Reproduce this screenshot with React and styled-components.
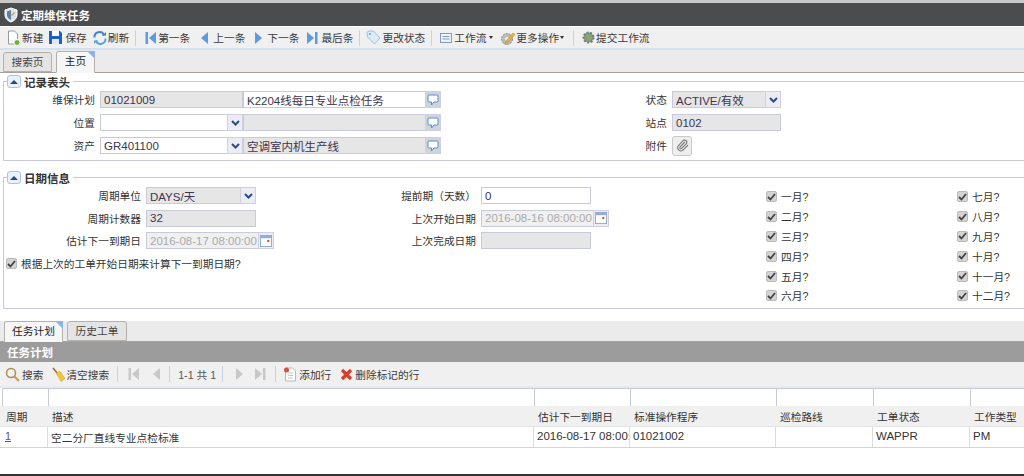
import React from 'react'
import styled, { createGlobalStyle, css } from 'styled-components'
import { Paperclip } from 'lucide-react'

const GlobalStyle = createGlobalStyle`
  html, body {
    margin: 0;
    padding: 0;
    background: #fff;
  }
  body {
    font-family: "Liberation Sans", "Noto Sans CJK SC", sans-serif;
    font-size: 10.7px;
    color: #333;
  }
`

const Page = styled.div`
  position: relative;
  width: 1024px;
  height: 476px;
  overflow: hidden;
  box-sizing: border-box;
  border-bottom: 2px solid #333;
  background-color: #fff;
  background-image: radial-gradient(#f1f1f1 0.6px, transparent 0.7px);
  background-size: 4px 4px;
`

const TitleBar = styled.div`
  display: flex;
  align-items: center;
  gap: 3px;
  box-sizing: border-box;
  height: 27px;
  padding-left: 4px;
  background: #4a4c4e;
  border-top: 3px solid #c9c9c9;
  border-bottom: 1px solid #fff;
  color: #fff;
  font-size: 11.5px;
  font-weight: 700;
`

const Toolbar = styled.div`
  display: flex;
  align-items: center;
  box-sizing: border-box;
  height: ${p => p.$height}px;
  padding-left: ${p => p.$pad}px;
  background: #f0f0f0;
  border-bottom: 2px solid ${p => p.$line};
  white-space: nowrap;
`

const Tool = styled.span`
  display: inline-flex;
  align-items: center;
  gap: ${p => p.$gap ?? 2}px;
  margin-left: ${p => p.$ml ?? 0}px;
  color: ${p => (p.$dim ? '#555' : '#3a3a3a')};
`

const Sep = styled.span`
  width: 1px;
  height: 16px;
  margin-left: ${p => p.$ml}px;
  background: #c4d4e8;
`

const Caret = styled.span`
  width: 0;
  height: 0;
  margin-left: 1px;
  border-left: 2.5px solid transparent;
  border-right: 2.5px solid transparent;
  border-top: 3px solid #333;
`

const TabBar = styled.div`
  display: flex;
  align-items: flex-end;
  gap: 4px;
  box-sizing: border-box;
  height: ${p => p.$height}px;
  margin-top: ${p => p.$mt ?? 0}px;
  padding-left: ${p => p.$pad}px;
  background: #ebebeb;
  border-bottom: 1px solid #a9a09c;
`

const Tab = styled.div`
  position: relative;
  box-sizing: border-box;
  width: ${p => p.$w}px;
  height: ${p => (p.$active ? p.$h + 2 : p.$h)}px;
  margin-bottom: ${p => (p.$active ? -1 : 0)}px;
  line-height: ${p => p.$h - 1}px;
  text-align: center;
  font-size: 10.7px;
  border: 1px solid #b5b0ac;
  border-radius: 3px 3px 0 0;
  color: #444;
  background: #e4e4e4;
  ${p =>
    p.$active &&
    css`
      background: #f6f6f6;
      border-bottom-color: #f6f6f6;
      color: #222;
      &::after {
        content: '';
        position: absolute;
        top: -1px;
        right: -1px;
        border-top: 8px solid #8db4e6;
        border-left: 8px solid transparent;
      }
    `}
`

const Section = styled.fieldset`
  box-sizing: border-box;
  height: ${p => p.$height}px;
  margin: ${p => p.$mt}px 0 0 3px;
  padding: 0;
  border: 1px solid #c9c9d9;
  border-right: none;
  min-inline-size: 0;
`

const Legend = styled.legend`
  display: flex;
  align-items: center;
  gap: 3px;
  margin-left: 3px;
  padding: 0 3px 0 0;
  height: 15px;
  font-size: 11.5px;
  font-weight: 700;
  color: #333;
`

const Collapse = styled.span`
  display: inline-flex;
  align-items: center;
  justify-content: center;
  box-sizing: border-box;
  width: 14px;
  height: 13px;
  border: 1px solid #a9c4e8;
  border-radius: 3px;
  background: #eaf1fb;
  &::before {
    content: '';
    border-left: 4px solid transparent;
    border-right: 4px solid transparent;
    border-bottom: 4px solid #274a8c;
  }
`

const HeaderGrid = styled.div`
  display: grid;
  grid-template-columns: 96px 143px 198px 231px 109px;
  grid-auto-rows: 17px;
  row-gap: 6px;
  align-items: center;
  padding-top: 2px;
`

const Label = styled.label`
  padding-right: 5px;
  text-align: right;
  color: #333;
  white-space: nowrap;
`

const Group = styled.div`
  display: flex;
  box-sizing: border-box;
  height: 17px;
  width: ${p => (p.$w ? `${p.$w}px` : 'auto')};
  margin-right: ${p => p.$mr ?? 0}px;
`

const Input = styled.input`
  flex: 1;
  box-sizing: border-box;
  width: ${p => (p.$w ? `${p.$w}px` : '100%')};
  min-width: 0;
  height: 17px;
  margin: 0;
  padding: 0 0 0 3px;
  border: 1px solid #c9c9dc;
  border-radius: 0;
  outline: none;
  font: 11.5px "Liberation Sans", "Noto Sans CJK SC", sans-serif;
  color: ${p => (p.$muted ? '#aaa' : '#3c3450')};
  background: ${p => (p.$tone === 'grey' ? '#e6e6e6' : p.$tone === 'pale' ? '#f0f0f0' : '#fff')};
`

const Addon = styled.span`
  display: inline-flex;
  flex: none;
  align-items: center;
  justify-content: center;
  box-sizing: border-box;
  width: ${p => p.$w ?? 16}px;
  height: 17px;
  margin-left: -1px;
  border: 1px solid #d0d0e0;
  background: ${p => p.$bg ?? '#ecedf4'};
`

const AttachButton = styled.span`
  display: inline-flex;
  align-items: center;
  justify-content: center;
  box-sizing: border-box;
  width: 20px;
  height: 20px;
  border: 1px solid #c9c9c9;
  border-radius: 3px;
  background: #eee;
  color: #777;
`

const DateBody = styled.div`
  display: flex;
  padding-top: 2px;
`

const DateLeft = styled.div`
  width: 762px;
`

const DateGrid = styled.div`
  display: grid;
  grid-template-columns: 142px 255px 80px 285px;
  grid-auto-rows: 17px;
  row-gap: 5.5px;
  align-items: center;
`

const CheckRow = styled.div`
  display: flex;
  align-items: center;
  gap: 4px;
  margin: 7px 0 0 2px;
  color: #333;
`

const CheckBox = styled.span`
  display: inline-flex;
  flex: none;
  align-items: center;
  justify-content: center;
  box-sizing: border-box;
  width: 11px;
  height: 11px;
  border: 1px solid #bbb;
  border-radius: 2px;
  background: #d4d4d4;
`

const MonthGrid = styled.div`
  display: grid;
  grid-template-columns: 191px 1fr;
  grid-template-rows: repeat(6, 19.8px);
  grid-auto-flow: column;
  align-items: center;
`

const MonthItem = styled.div`
  display: flex;
  align-items: center;
  gap: 4px;
  color: #333;
`

const GridHeader = styled.div`
  box-sizing: border-box;
  height: 20px;
  padding: 2px 0 0 7px;
  background: #9c9c9c;
  color: #fff;
  font-size: 11.5px;
  font-weight: 700;
`

const Row = styled.div`
  display: grid;
  grid-template-columns: 46px 486px 96px 146px 97px 97px 60px;
  box-sizing: border-box;
  height: ${p => p.$height}px;
  padding-left: 2px;
  background: ${p => p.$bg};
  border-bottom: ${p => (p.$line ? `1px solid ${p.$line}` : 'none')};
  overflow: hidden;
`

const FilterCell = styled.div`
  border-top: 1px solid #c9c9dc;
  border-left: 1px solid #c9c9dc;
  background: #fff;
`

const HeadCell = styled.div`
  padding: 3px 0 0 4px;
  color: #333;
  white-space: nowrap;
  overflow: hidden;
`

const Cell = styled.div`
  padding: 3px 0 0 ${p => p.$pl ?? 3}px;
  border-right: 1px solid ${p => (p.$noline ? 'transparent' : '#dcdcdc')};
  color: #333;
  white-space: nowrap;
  overflow: hidden;
  font-size: ${p => p.$size ?? 10.7}px;
`

const RecordLink = styled.a`
  color: #5a4a9c;
  text-decoration: underline;
`

const Shield = () => (
  <svg width="14" height="16" viewBox="0 0 14 16">
    <path d="M7 1l6 2v5c0 3.500-3 6-6 7-3-1-6-3.500-6-7V3z" fill="#dfe3e8" stroke="#fff" />
    <path d="M7 3v10C4.500 12 3 10 3 8V4.500z" fill="#5c7fa8" />
    <path d="M7 8l3-3 1 1-3 3z" fill="#c9a24a" />
  </svg>
)

const NewDoc = () => (
  <svg width="15" height="16" viewBox="0 0 15 16">
    <path d="M2.500 1h6l3 3v10h-9z" fill="#fff" stroke="#9a9a9a" />
    <circle cx="11" cy="12.500" r="3" fill="#6fb33c" stroke="#fff" />
  </svg>
)

const Floppy = () => (
  <svg width="15" height="15" viewBox="0 0 15 15">
    <path d="M1 1h11l2 2v11H1z" fill="#1c62c4" />
    <rect x="4" y="1" width="7" height="5" fill="#fff" />
    <rect x="4" y="9" width="7" height="5" fill="#dfe8f5" />
  </svg>
)

const Refresh = () => (
  <svg width="14" height="14" viewBox="0 0 14 14" fill="none">
    <path d="M1.500 6.500A5 5 0 0 1 11 4" stroke="#3f86d0" strokeWidth="2" />
    <path d="M12.500 7.500A5 5 0 0 1 3 10" stroke="#5ba3de" strokeWidth="2" />
    <path d="M9 5l4-.5V1z" fill="#3f86d0" />
    <path d="M5 9l-4 .5V13z" fill="#5ba3de" />
  </svg>
)

const Nav = ({ kind, color = '#5f9ae0', w = 11 }) => {
  const shapes = {
    first: (
      <>
        <rect x="0.500" y="1" width="2.500" height="12" fill={color} />
        <path d="M11 1v12L4 7z" fill={color} />
      </>
    ),
    prev: <path d="M8 1v12L1 7z" fill={color} />,
    next: <path d="M1 1v12l7-6z" fill={color} />,
    last: (
      <>
        <rect x="8" y="1" width="2.500" height="12" fill={color} />
        <path d="M0 1v12l7-6z" fill={color} />
      </>
    ),
  }
  return (
    <svg width={w} height="14" viewBox={`0 0 ${w} 14`}>
      {shapes[kind]}
    </svg>
  )
}

const Tag = () => (
  <svg width="15" height="15" viewBox="0 0 15 15">
    <path d="M1 2.500L3 1h4.500l6.500 7-5.500 6L1.500 7z" fill="#dcebf8" stroke="#9cc0e2" />
    <circle cx="4" cy="4" r="1" fill="#6d9cc9" />
  </svg>
)

const ListIcon = () => (
  <svg width="12" height="10" viewBox="0 0 12 10">
    <rect x="0.500" y="0.500" width="11" height="9" fill="#eef3fa" stroke="#7f9cc4" />
    <path d="M2.500 3.500h7M2.500 6h7" stroke="#7f9cc4" />
  </svg>
)

const GearPen = () => (
  <svg width="16" height="16" viewBox="0 0 16 16">
    <circle cx="7" cy="9" r="5.500" fill="#bcbcbc" stroke="#8e8e8e" strokeDasharray="2 1" />
    <circle cx="7" cy="9" r="2" fill="#eee" />
    <path d="M6 11l7-8 2 1.500-7 8-3 1z" fill="#e8b23c" stroke="#b9832a" strokeWidth="0.500" />
  </svg>
)

const GearGreen = () => (
  <svg width="15" height="15" viewBox="0 0 15 15">
    <circle cx="7.500" cy="7.500" r="5" fill="#8a9a8a" stroke="#6f7f6f" strokeWidth="2" strokeDasharray="2 1.500" />
    <circle cx="7.500" cy="7.500" r="2.200" fill="#7fae6a" />
  </svg>
)

const Bubble = () => (
  <svg width="12" height="12" viewBox="0 0 12 12">
    <path d="M2 1h8a1 1 0 0 1 1 1v5a1 1 0 0 1-1 1H7l-2.500 3V8H2a1 1 0 0 1-1-1V2a1 1 0 0 1 1-1z" fill="#fff" stroke="#4f8fd8" />
  </svg>
)

const Chevron = () => (
  <svg width="9" height="6" viewBox="0 0 9 6" fill="none">
    <path d="M1 1l3.500 3.500L8 1" stroke="#2b4a86" strokeWidth="2" />
  </svg>
)

const Calendar = () => (
  <svg width="12" height="12" viewBox="0 0 13 13">
    <rect x="0.500" y="0.500" width="12" height="12" fill="#fff" stroke="#8fa9cc" />
    <rect x="1" y="1" width="11" height="2.500" fill="#8fb0dc" />
    <circle cx="9" cy="6.500" r="1.300" fill="#d8583c" />
  </svg>
)

const Tick = () => (
  <svg width="9" height="8" viewBox="0 0 9 8" fill="none">
    <path d="M1 4l2.500 2.500L8 1" stroke="#444" strokeWidth="1.800" />
  </svg>
)

const Magnifier = () => (
  <svg width="15" height="15" viewBox="0 0 15 15" fill="none">
    <circle cx="6" cy="6" r="4.500" fill="#eef3f8" stroke="#b08a50" strokeWidth="1.500" />
    <path d="M9.500 9.500L14 14" stroke="#d49a3c" strokeWidth="2.200" />
  </svg>
)

const Broom = () => (
  <svg width="13" height="15" viewBox="0 0 13 15">
    <path d="M1 1l5 6" stroke="#a06a2c" strokeWidth="1.600" />
    <path d="M4 6l4-1.500 5 7-4 3z" fill="#f0c53a" stroke="#cf9c22" strokeWidth="0.500" />
  </svg>
)

const AddRow = () => (
  <svg width="14" height="15" viewBox="0 0 14 15">
    <path d="M2.500 1h7l3 3v10h-10z" fill="#fff" stroke="#b8b8b8" />
    <path d="M5 6h5M5 8.500h5M5 11h5" stroke="#c4c4c4" />
    <circle cx="3.500" cy="3" r="2.500" fill="#dd4b39" />
  </svg>
)

const RedX = () => (
  <svg width="13" height="13" viewBox="0 0 13 13" fill="none">
    <path d="M2 2l9 9M11 2l-9 9" stroke="#e0392c" strokeWidth="3.200" />
  </svg>
)

const months = ['一月?', '二月?', '三月?', '四月?', '五月?', '六月?', '七月?', '八月?', '九月?', '十月?', '十一月?', '十二月?']

const columns = ['周期', '描述', '估计下一到期日', '标准操作程序', '巡检路线', '工单状态', '工作类型']

const App = () => {
  return (
    <Page>
      <GlobalStyle />
      <TitleBar>
        <Shield />
        定期维保任务
      </TitleBar>
      <Toolbar $height={23} $pad={6} $line="#d3e0f0">
        <Tool $gap={1}><NewDoc />新建</Tool>
        <Tool $ml={5}><Floppy />保存</Tool>
        <Tool $ml={6} $gap={1}><Refresh />刷新</Tool>
        <Sep $ml={6} />
        <Tool $ml={9}><Nav kind="first" />第一条</Tool>
        <Tool $ml={10} $gap={5}><Nav kind="prev" w={8} />上一条</Tool>
        <Tool $ml={9} $gap={4}><Nav kind="next" w={9} />下一条</Tool>
        <Tool $ml={8} $gap={3}><Nav kind="last" />最后条</Tool>
        <Sep $ml={6} />
        <Tool $ml={6} $gap={1}><Tag />更改状态</Tool>
        <Sep $ml={6} />
        <Tool $ml={8}><ListIcon />工作流<Caret /></Tool>
        <Tool $ml={7} $gap={0}><GearPen />更多操作<Caret /></Tool>
        <Sep $ml={9} />
        <Tool $ml={7} $gap={0}><GearGreen />提交工作流</Tool>
      </Toolbar>
      <TabBar $height={23} $pad={3}>
        <Tab $w={49} $h={20}>搜索页</Tab>
        <Tab $w={39} $h={20} $active>主页</Tab>
      </TabBar>

      <Section $height={87} $mt={1}>
        <Legend><Collapse />记录表头</Legend>
        <HeaderGrid>
          <Label>维保计划</Label>
          <Input readOnly $tone="grey" defaultValue="01021009" />
          <Group>
            <Input readOnly defaultValue="K2204线每日专业点检任务" />
            <Addon $bg="#cfd3dc"><Bubble /></Addon>
          </Group>
          <Label>状态</Label>
          <Group>
            <Input readOnly $tone="grey" defaultValue="ACTIVE/有效" />
            <Addon><Chevron /></Addon>
          </Group>

          <Label>位置</Label>
          <Group>
            <Input readOnly />
            <Addon><Chevron /></Addon>
          </Group>
          <Group>
            <Input readOnly $tone="grey" />
            <Addon $bg="#cfd3dc"><Bubble /></Addon>
          </Group>
          <Label>站点</Label>
          <Input readOnly $tone="grey" defaultValue="0102" />

          <Label>资产</Label>
          <Group>
            <Input readOnly defaultValue="GR401100" />
            <Addon><Chevron /></Addon>
          </Group>
          <Group>
            <Input readOnly $tone="grey" defaultValue="空调室内机生产线" />
            <Addon $bg="#cfd3dc"><Bubble /></Addon>
          </Group>
          <Label>附件</Label>
          <AttachButton><Paperclip size={13} /></AttachButton>
        </HeaderGrid>
      </Section>

      <Section $height={139} $mt={9}>
        <Legend><Collapse />日期信息</Legend>
        <DateBody>
          <DateLeft>
            <DateGrid>
              <Label>周期单位</Label>
              <Group $w={110}>
                <Input readOnly $tone="grey" defaultValue="DAYS/天" />
                <Addon><Chevron /></Addon>
              </Group>
              <Label>提前期（天数）</Label>
              <Input readOnly $w={110} defaultValue="0" />

              <Label>周期计数器</Label>
              <Input readOnly $tone="grey" $w={110} defaultValue="32" />
              <Label>上次开始日期</Label>
              <Group $w={128}>
                <Input readOnly $tone="pale" $muted defaultValue="2016-08-16 08:00:00" />
                <Addon><Calendar /></Addon>
              </Group>

              <Label>估计下一到期日</Label>
              <Group $w={128}>
                <Input readOnly $tone="pale" $muted defaultValue="2016-08-17 08:00:00" />
                <Addon><Calendar /></Addon>
              </Group>
              <Label>上次完成日期</Label>
              <Input readOnly $tone="grey" $w={110} />
            </DateGrid>
            <CheckRow>
              <CheckBox><Tick /></CheckBox>
              根据上次的工单开始日期来计算下一到期日期?
            </CheckRow>
          </DateLeft>
          <MonthGrid>
            {months.map(name => (
              <MonthItem key={name}>
                <CheckBox><Tick /></CheckBox>
                {name}
              </MonthItem>
            ))}
          </MonthGrid>
        </DateBody>
      </Section>

      <TabBar $height={21} $mt={12} $pad={4}>
        <Tab $w={59} $h={19} $active>任务计划</Tab>
        <Tab $w={60} $h={20}>历史工单</Tab>
      </TabBar>
      <GridHeader>任务计划</GridHeader>
      <Toolbar $height={26} $pad={5} $line="#e8e8f0">
        <Tool><Magnifier />搜索</Tool>
        <Tool $ml={9} $gap={1}><Broom />清空搜索</Tool>
        <Sep $ml={8} />
        <Tool $ml={10}><Nav kind="first" color="#c8c8c8" /></Tool>
        <Tool $ml={13}><Nav kind="prev" color="#c8c8c8" w={8} /></Tool>
        <Sep $ml={9} />
        <Tool $ml={8} $dim>1-1 共 1</Tool>
        <Sep $ml={6} />
        <Tool $ml={12}><Nav kind="next" color="#c8c8c8" w={9} /></Tool>
        <Tool $ml={11}><Nav kind="last" color="#c8c8c8" /></Tool>
        <Sep $ml={9} />
        <Tool $ml={7}><AddRow />添加行</Tool>
        <Tool $ml={9}><RedX />删除标记的行</Tool>
      </Toolbar>
      <Row $height={18} $bg="#fff">
        {columns.map(name => <FilterCell key={name} />)}
      </Row>
      <Row $height={21} $bg="#f0f0f0" $line="#e4e4e4">
        {columns.map(name => <HeadCell key={name}>{name}</HeadCell>)}
      </Row>
      <Row $height={21} $bg="#fff" $line="#d4d4d4">
        <Cell><RecordLink href="#">1</RecordLink></Cell>
        <Cell>空二分厂直线专业点检标准</Cell>
        <Cell $size={11.5}>2016-08-17 08:00:00</Cell>
        <Cell $size={11.5}>01021002</Cell>
        <Cell />
        <Cell $size={11.5}>WAPPR</Cell>
        <Cell $size={11.5} $noline>PM</Cell>
      </Row>
    </Page>
  )
}

export default App
